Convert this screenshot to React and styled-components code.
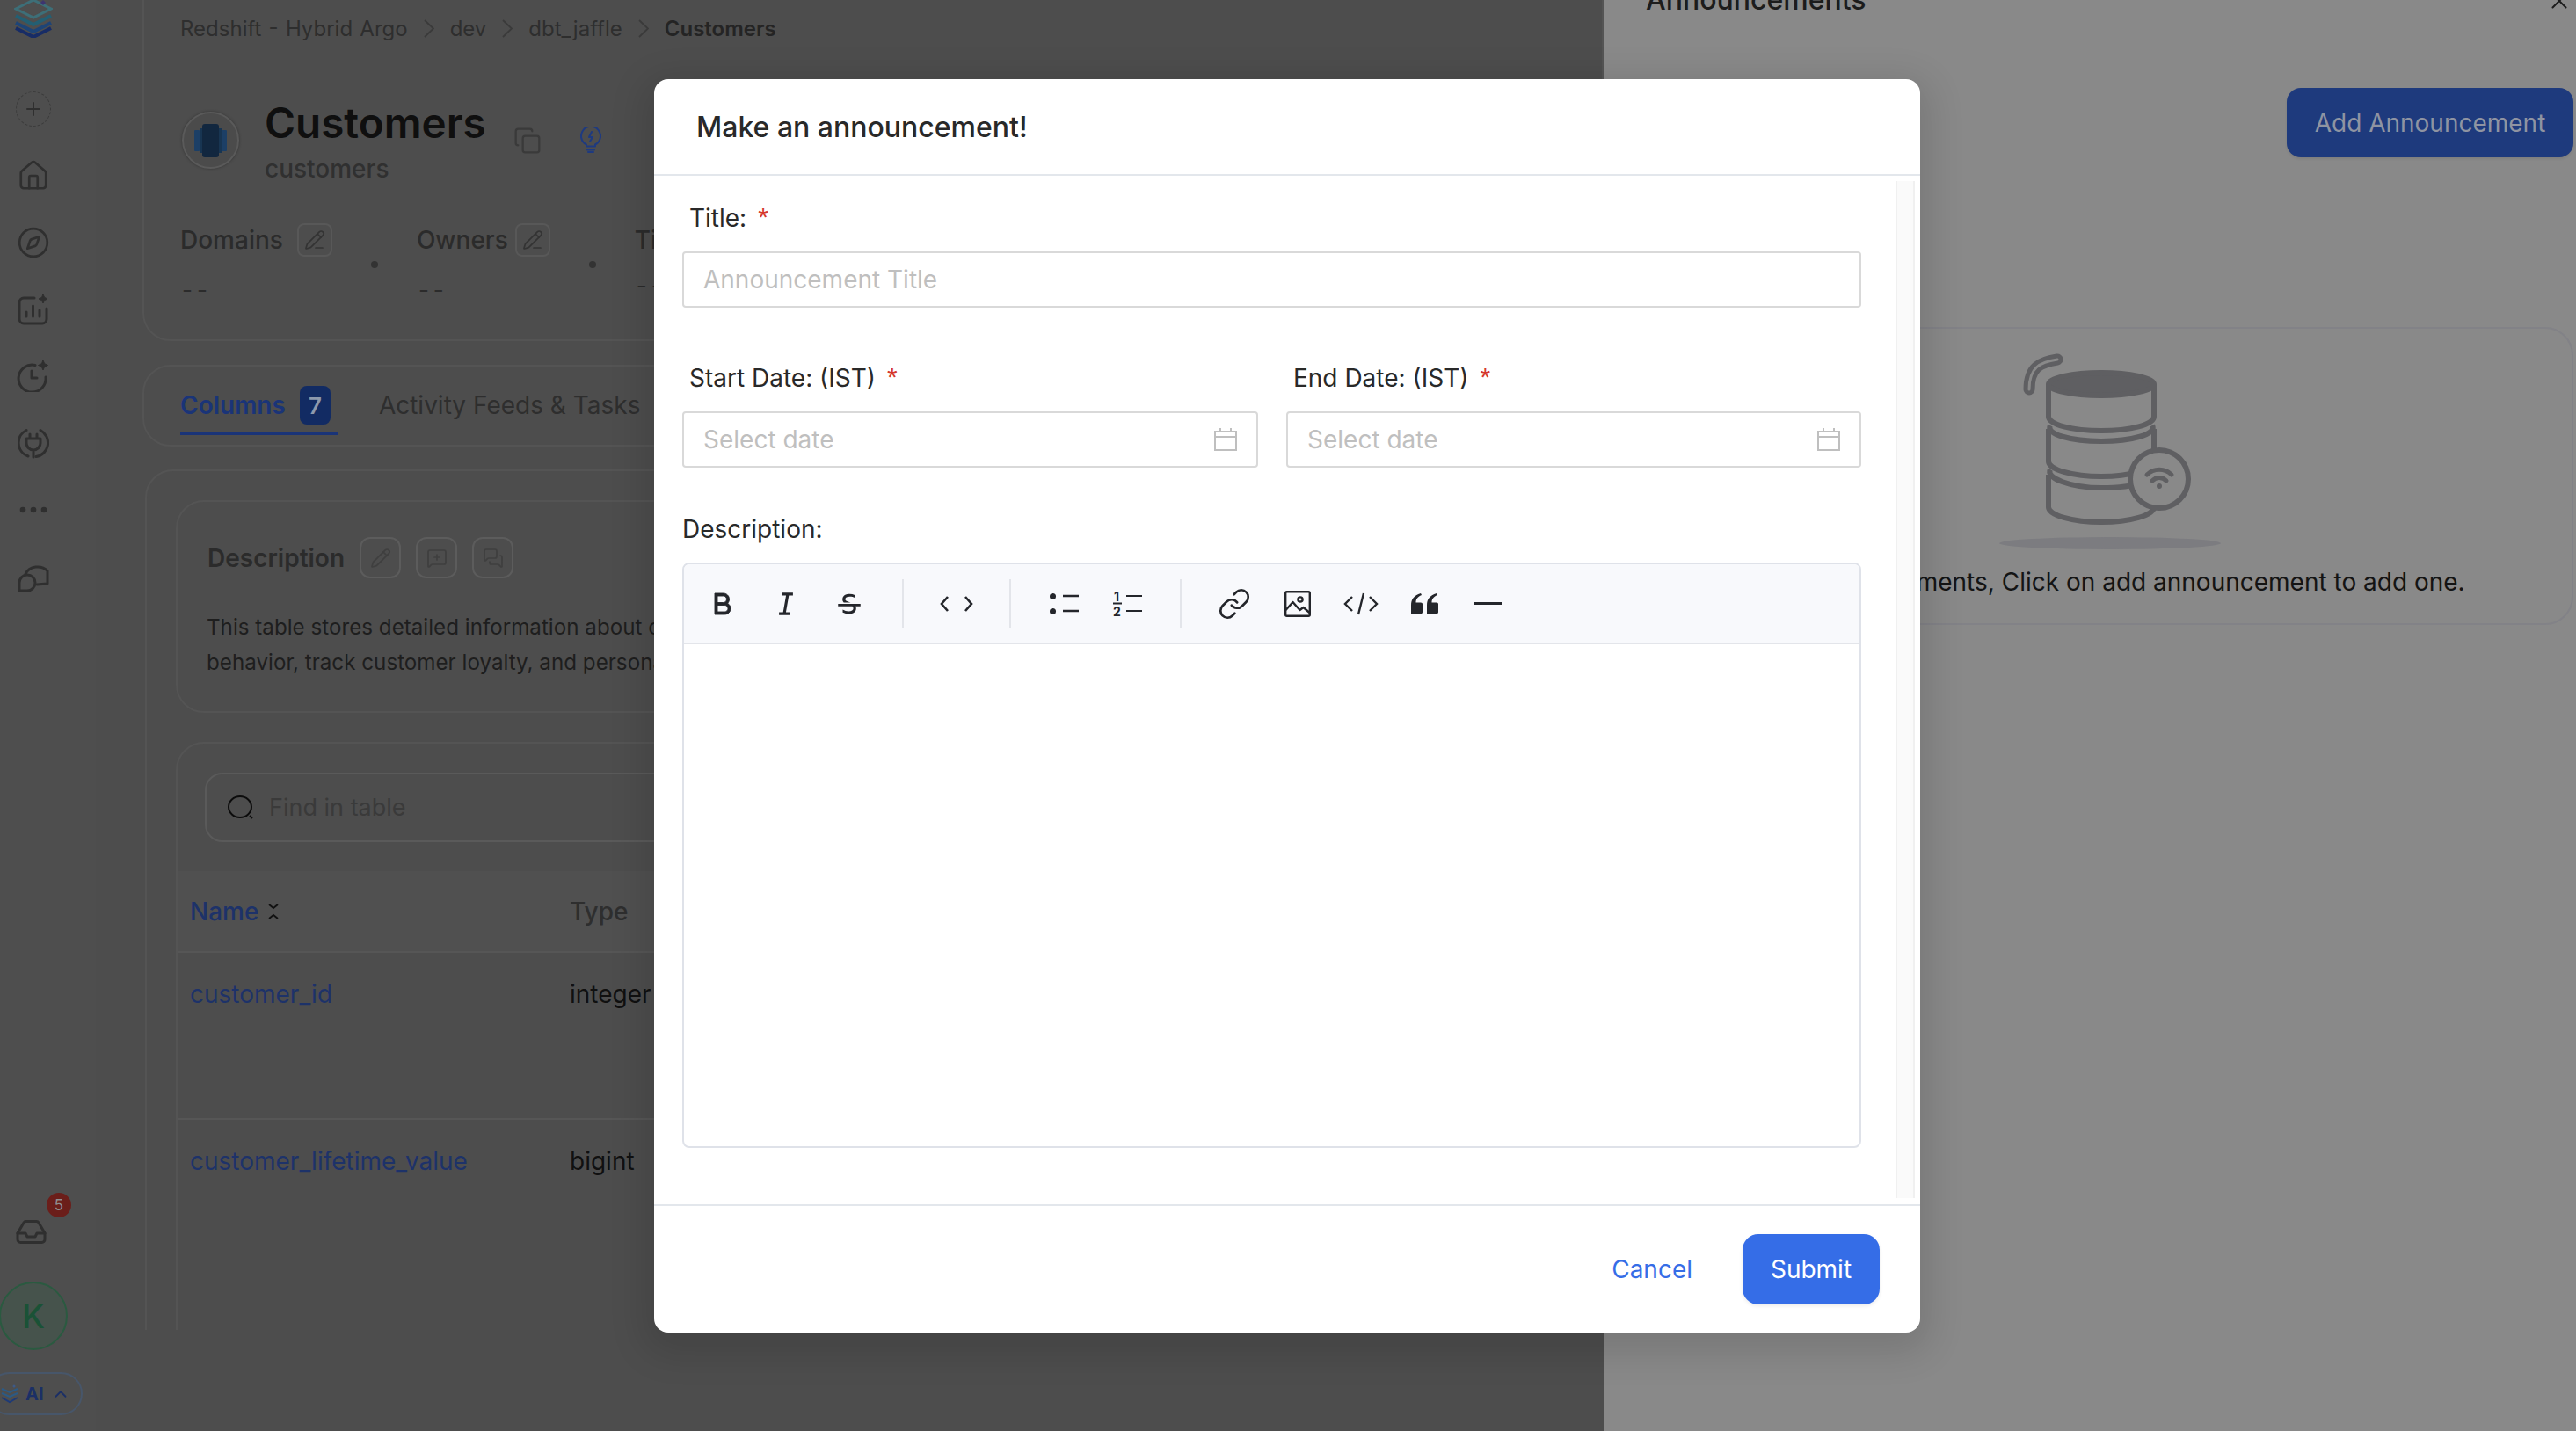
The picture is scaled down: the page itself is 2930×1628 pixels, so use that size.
import React from 'react';
import styled, { createGlobalStyle } from 'styled-components';
import { RiBold, RiItalic, RiStrikethrough } from 'react-icons/ri';
import {
  ChevronUp,
  Compass,
  Copy,
  House,
  Link,
  MessageSquarePlus,
  MessagesSquare,
  Pencil,
  PencilLine,
  Plus,
  X,
} from 'lucide-react';

const GlobalStyle = createGlobalStyle`
  html, body {
    margin: 0;
    padding: 0;
    background: #4d4d4d;
    overflow: hidden;
  }
  * {
    box-sizing: border-box;
  }
`;

const Screen = styled.div`
  position: relative;
  display: flex;
  width: 2930px;
  height: 1628px;
  overflow: hidden;
  font-family: Inter, 'Liberation Sans', sans-serif;
`;

/* left page, behind both masks */
const Page = styled.div`
  flex: 0 0 1824px;
  display: flex;
  background: #4d4d4d;
`;

const Sidebar = styled.aside`
  flex: 0 0 109px;
  height: 1628px;
  display: flex;
  flex-direction: column;
  justify-content: space-between;
  background: #4e4e4e;
  color: #2f2f2f;
`;

const NavGroup = styled.nav`
  display: flex;
  flex-direction: column;
  align-items: center;
  width: 76px;
`;

const LogoWrap = styled.div`
  height: 43px;
  margin-bottom: 43px;
`;

const NavSlot = styled.div`
  height: 76px;
  display: flex;
  align-items: center;
  justify-content: center;
`;

const DashedPlus = styled.div`
  width: 40px;
  height: 40px;
  border-radius: 50%;
  border: 1px dashed #3c3c3c;
  display: flex;
  align-items: center;
  justify-content: center;
`;

const BottomGroup = styled.div`
  display: flex;
  flex-direction: column;
  align-items: flex-start;
  padding-bottom: 18px;
`;

const InboxWrap = styled.div`
  position: relative;
  margin-left: 18px;
  width: 35px;
  height: 27px;
  margin-bottom: 43px;
`;

const Badge = styled.span`
  position: absolute;
  left: 35px;
  top: -31px;
  width: 28px;
  height: 28px;
  border-radius: 50%;
  background: #6b1e1a;
  color: #8f8f8f;
  font-size: 17px;
  display: flex;
  align-items: center;
  justify-content: center;
`;

const Avatar = styled.div`
  width: 78px;
  height: 78px;
  margin-left: -1px;
  border-radius: 50%;
  background: #46534c;
  border: 2px solid #2a5a40;
  color: #1a5236;
  font-size: 38px;
  font-weight: 500;
  display: flex;
  align-items: center;
  justify-content: center;
`;

const AiPill = styled.div`
  margin-top: 25px;
  margin-left: -14px;
  width: 108px;
  height: 49px;
  padding-left: 13px;
  border-radius: 25px;
  border: 2px solid #47566a;
  display: flex;
  align-items: center;
  gap: 8px;
  color: #1b2f66;
  font-size: 20px;
  font-weight: 700;
`;

const Main = styled.main`
  flex: 1;
  min-width: 0;
  height: 1513px;
  overflow: hidden;
  padding-left: 53px;
`;

const Card = styled.section`
  border: 2px solid #545454;
  border-radius: 32px;
`;

const SummaryCard = styled(Card)`
  margin-top: -40px;
  height: 428px;
  padding: 54px 0 0 41px;
`;

const Breadcrumb = styled.div`
  display: flex;
  align-items: center;
  height: 32px;
  gap: 18px;
  color: #2e2e2e;
  font-size: 24px;
  word-spacing: 1.5px;
`;

const Crumb = styled.span`
  font-weight: ${p => (p.$current ? 600 : 400)};
  color: ${p => (p.$current ? '#242424' : 'inherit')};
`;

const TitleRow = styled.div`
  display: flex;
  align-items: flex-start;
  margin-top: 64px;
`;

const ServiceIcon = styled.div`
  width: 65px;
  height: 65px;
  margin: 15px 29px 0 2px;
  border-radius: 50%;
  background: #4b4b4b;
  border: 2px solid #5a5a5a;
  box-shadow: 0 0 3px #333;
  display: flex;
  align-items: center;
  justify-content: center;
`;

const TitleBlock = styled.div`
  display: flex;
  flex-direction: column;
`;

const EntityTitle = styled.h1`
  margin: 0;
  font-size: 47.6px;
  line-height: 56px;
  font-weight: 600;
  color: #0f0f0f;
`;

const EntitySub = styled.div`
  margin-top: 8px;
  font-size: 28px;
  line-height: 32px;
  font-weight: 500;
  color: #303030;
`;

const TitleIcon = styled.div`
  margin: 32px 0 0 ${p => p.$gap}px;
  color: ${p => p.$color || '#3a3a3a'};
  display: flex;
`;

const MetaRow = styled.div`
  display: flex;
  align-items: center;
  gap: 44px;
  margin-top: 45px;
`;

const MetaItem = styled.div`
  display: flex;
  flex-direction: column;
  height: 96px;
`;

const MetaHeader = styled.div`
  display: flex;
  align-items: center;
  height: 40px;
  gap: 8px;
  font-size: 28px;
  font-weight: 500;
  color: #2b2b2b;
`;

const EditBox = styled.div`
  width: 40px;
  height: 38px;
  margin-left: ${p => p.$ml || 0}px;
  border: 2px solid #585858;
  border-radius: 8px;
  display: flex;
  align-items: center;
  justify-content: center;
  color: #333;
`;

const MetaValue = styled.div`
  margin-top: ${p => (p.$raised ? 16 : 21)}px;
  font-size: 26px;
  line-height: 32px;
  letter-spacing: 5px;
  margin-left: 2px;
  color: #2b2b2b;
`;

const Dot = styled.span`
  width: 8px;
  height: 8px;
  border-radius: 50%;
  background: #333;
`;

const TabsCard = styled(Card)`
  margin-top: 27px;
  height: 93px;
  padding-left: 41px;
  display: flex;
  gap: 47px;
`;

const Tab = styled.div`
  height: 80px;
  padding: ${p => (p.$active ? '16px 8px 0 0' : '12px 0 0')};
  margin-top: -2px;
  display: flex;
  align-items: center;
  gap: 16px;
  font-size: 28px;
  font-weight: ${p => (p.$active ? 600 : 400)};
  color: ${p => (p.$active ? '#1a3478' : '#2e2e2e')};
  border-bottom: ${p => (p.$active ? '4px solid #1a3478' : 'none')};
`;

const TabCount = styled.span`
  width: 35px;
  height: 44px;
  border-radius: 8px;
  background: #122b63;
  color: #8d99ad;
  font-size: 26px;
  display: flex;
  align-items: center;
  justify-content: center;
`;

const ContentCard = styled(Card)`
  margin: 26px 0 0 3px;
  padding: 33px 0 0 33px;
  height: 1100px;
`;

const DescriptionCard = styled(Card)`
  height: 242px;
  padding: 40px 0 0 33px;
`;

const DescriptionHead = styled.div`
  display: flex;
  align-items: center;
  height: 47px;
  gap: 17px;
`;

const DescriptionTitle = styled.h3`
  margin: 0;
  padding-left: 1px;
  font-size: 28px;
  font-weight: 600;
  color: #2b2b2b;
`;

const ActionBox = styled.div`
  width: 47px;
  height: 47px;
  border: 2px solid #5c5c5c;
  border-radius: 12px;
  display: flex;
  align-items: center;
  justify-content: center;
  color: #3f3f3f;
`;

const DescriptionText = styled.p`
  margin: 36px 0 0;
  font-size: 24.2px;
  line-height: 40px;
  white-space: nowrap;
  color: #1e1e1e;
`;

const TableCard = styled(Card)`
  margin-top: 33px;
  height: 800px;
  padding-top: 33px;
`;

const SearchBox = styled.div`
  margin-left: 31px;
  height: 79px;
  width: 1000px;
  border: 2px solid #5a5a5a;
  border-radius: 20px;
  display: flex;
  align-items: center;
  gap: 17px;
  padding-left: 24px;
  color: #3a3a3a;
  font-size: 27px;
`;

const TableHead = styled.div`
  margin-top: 33px;
  height: 93px;
  background: #505050;
  border-bottom: 2px solid #565656;
  display: grid;
  grid-template-columns: 432px 1fr;
  align-items: center;
  padding-left: 14px;
  font-size: 28px;
  font-weight: 500;
  color: #2e2e2e;
`;

const HeadName = styled.span`
  display: flex;
  align-items: center;
  gap: 11px;
  color: #1d3269;
`;

const TableRow = styled.div`
  height: 188px;
  display: grid;
  grid-template-columns: 432px 1fr;
  padding: 27px 0 0 14px;
  font-size: 28px;
  line-height: 40px;
  color: #101010;

  & + & {
    border-top: 2px solid #565656;
  }
`;

const ColumnLink = styled.span`
  color: #1d3269;
`;

/* announcements drawer, behind the modal mask */
const Drawer = styled.aside`
  flex: 1;
  min-width: 0;
  height: 1628px;
  padding: 0 3px 0 48px;
  background: #898989;
  display: flex;
  flex-direction: column;
`;

const DrawerHead = styled.header`
  display: flex;
  justify-content: space-between;
  margin-top: -22px;
  height: 44px;
  padding-right: 1px;
  color: #1c1c1c;
`;

const DrawerTitle = styled.h2`
  margin: 0;
  font-size: 32px;
  line-height: 44px;
  font-weight: 500;
`;

const CloseIcon = styled(X)`
  margin-top: 8px;
`;

const DrawerActions = styled.div`
  margin-top: 78px;
  display: flex;
  justify-content: flex-end;
`;

const AddButton = styled.button`
  width: 326px;
  height: 79px;
  border: 0;
  border-radius: 16px;
  background: #1e3a7d;
  color: #8f94a2;
  font-family: inherit;
  font-size: 28px;
  box-shadow: 0 2px 3px rgba(0, 0, 0, 0.08);
`;

const EmptyCard = styled.div`
  margin-top: 193px;
  height: 339px;
  padding-top: 26px;
  border: 2px solid #828287;
  border-radius: 32px;
  display: flex;
  flex-direction: column;
  align-items: center;
`;

const EmptyText = styled.p`
  margin: 12px 0 0;
  padding-left: 4px;
  font-size: 28px;
  line-height: 40px;
  white-space: nowrap;
  color: #141414;
`;

/* modal */
const Modal = styled.div`
  position: absolute;
  left: 744px;
  top: 90px;
  width: 1440px;
  height: 1426px;
  display: flex;
  flex-direction: column;
  background: #fff;
  border-radius: 16px;
  box-shadow: 0 12px 40px 12px rgba(0, 0, 0, 0.12);
`;

const ModalHead = styled.header`
  flex: 0 0 110px;
  display: flex;
  align-items: center;
  padding-left: 48px;
  border-bottom: 2px solid #e3e7ec;
  font-size: 32px;
  font-weight: 500;
  color: #292929;
`;

const ModalBody = styled.div`
  flex: 1;
  min-height: 0;
  display: flex;
  justify-content: space-between;
  padding: 6px 6px 7px 32px;
`;

const Form = styled.form`
  flex: 0 0 1341px;
  padding-top: 22px;
`;

const Label = styled.label`
  display: flex;
  align-items: center;
  height: 40px;
  margin-bottom: 18px;
  padding-left: ${p => (p.$flush ? 0 : 8)}px;
  font-size: 28px;
  color: #292929;
`;

const Required = styled.span`
  margin: 0 0 2px 13px;
  font-family: 'Liberation Sans', sans-serif;
  font-size: 30px;
  line-height: 30px;
  color: #d5382c;
`;

const Field = styled.div`
  height: 64px;
  display: flex;
  align-items: center;
  justify-content: space-between;
  padding: 0 22px;
  border: 2px solid #d9d9d9;
  border-radius: 4px;
  font-size: 28px;
  color: #bfbfbf;
`;

const DateRow = styled.div`
  display: grid;
  grid-template-columns: 655px 654px;
  gap: 32px;
  margin-top: 60px;
`;

const DescriptionLabelWrap = styled.div`
  margin-top: 50px;
`;

const Editor = styled.div`
  height: 666px;
  border: 2px solid #dfe2e9;
  border-radius: 8px;
  overflow: hidden;
`;

const Toolbar = styled.div`
  height: 91px;
  display: flex;
  align-items: center;
  padding-left: 8px;
  background: #f8f9fc;
  border-bottom: 2px solid #e3e5ea;
`;

const ToolGroup = styled.div`
  display: flex;
  align-items: center;
`;

const ToolDivider = styled.span`
  width: 2px;
  height: 55px;
  margin: 0 24px;
  background: #e3e5ea;
`;

const Tool = styled.div`
  width: 72px;
  height: 48px;
  display: flex;
  align-items: center;
  justify-content: center;
  color: #24262b;
`;

const ScrollTrack = styled.div`
  flex: 0 0 22px;
  background: #fafafa;
  border-left: 2px solid #f0f0f0;
  border-right: 2px solid #f0f0f0;
`;

const ModalFoot = styled.footer`
  flex: 0 0 146px;
  display: flex;
  align-items: center;
  justify-content: flex-end;
  gap: 57px;
  padding-right: 46px;
  border-top: 2px solid #e3e7ec;
`;

const CancelButton = styled.button`
  padding: 0;
  border: 0;
  background: none;
  font-family: inherit;
  font-size: 28px;
  color: #356de7;
`;

const SubmitButton = styled.button`
  width: 156px;
  height: 80px;
  border: 0;
  border-radius: 18px;
  background: #356de7;
  color: #fff;
  font-family: inherit;
  font-size: 28px;
  box-shadow: 0 2px 4px rgba(0, 0, 0, 0.08);
`;

const Logo = () => (
  <svg width="44" height="43" viewBox="0 0 44 43" fill="none">
    <path d="M2 10 L22 0 L42 10 L22 20 Z" stroke="#3d6f78" strokeWidth="3" />
    <path d="M2 18 L22 28 L42 18" stroke="#235f73" strokeWidth="4" />
    <path d="M2 26 L22 36 L42 26" stroke="#1d4477" strokeWidth="4" />
    <path d="M2 32 L22 42 L42 32" stroke="#172c66" strokeWidth="4" />
    <path d="M33 0 L36 3 L33 6 L30 3 Z" fill="#3d3570" />
  </svg>
);

const CrumbChevron = () => (
  <svg width="12" height="21" viewBox="0 0 12 21" fill="none" stroke="#3a3a3a" strokeWidth="1.800">
    <path d="M1 1l10 9.500L1 20" />
  </svg>
);

const ChartSpark = () => (
  <svg width="36" height="36" viewBox="0 0 36 36" fill="none" stroke="currentColor" strokeWidth="3" strokeLinecap="round" strokeLinejoin="round">
    <path d="M19 5H7a5 5 0 0 0-5 5v19a5 5 0 0 0 5 5h21a5 5 0 0 0 5-5V17" />
    <path d="M10 26v-5M17.500 26V14M25 26v-7" />
    <path d="M29 1l1.600 3.400L34 6l-3.400 1.600L29 11l-1.600-3.400L24 6l3.400-1.600z" fill="currentColor" strokeWidth="1" />
  </svg>
);

const ClockSpark = () => (
  <svg width="38" height="36" viewBox="0 0 38 36" fill="none" stroke="currentColor" strokeWidth="3" strokeLinecap="round" strokeLinejoin="round">
    <path d="M21 5.500A15.500 15.500 0 1 0 33 19" />
    <path d="M17 12v8h6" />
    <path d="M30 0l1.700 3.800L35.500 5.500l-3.800 1.700L30 11l-1.700-3.800L24.500 5.500l3.800-1.700z" fill="currentColor" strokeWidth="1" />
  </svg>
);

const PlugCircle = () => (
  <svg width="36" height="36" viewBox="0 0 36 36" fill="none" stroke="currentColor" strokeWidth="3" strokeLinecap="round" strokeLinejoin="round">
    <path d="M10 3.500A16 16 0 0 0 12 33M26 3.500A16 16 0 0 1 21 33.500" />
    <path d="M10 13h16v5a8 8 0 0 1-16 0zM14 8v5M22 8v5M18 26v8" />
  </svg>
);

const Dots = () => (
  <svg width="32" height="8" viewBox="0 0 32 8" fill="currentColor">
    <circle cx="4" cy="4" r="3.300" />
    <circle cx="16" cy="4" r="3.300" />
    <circle cx="28" cy="4" r="3.300" />
  </svg>
);

const ChatBubbles = () => (
  <svg width="36" height="36" viewBox="0 0 36 36" fill="none" stroke="currentColor" strokeWidth="3" strokeLinecap="round" strokeLinejoin="round">
    <path d="M9 15A15 13.500 0 0 1 34 11.500V26l-12 1" />
    <path d="M2 34V25a9 9 0 1 1 9 9z" />
  </svg>
);

const Tray = () => (
  <svg width="35" height="27" viewBox="0 0 35 27" fill="none" stroke="currentColor" strokeWidth="3" strokeLinejoin="round" strokeLinecap="round">
    <path d="M2 15L9 3a3 3 0 0 1 2.500-1.500h12A3 3 0 0 1 26 3l7 12" />
    <path d="M2 15h9l2 4h9l2-4h9v7a3.500 3.500 0 0 1-3.500 3.500h-24A3.500 3.500 0 0 1 2 22z" />
  </svg>
);

const MiniStack = () => (
  <svg width="20" height="22" viewBox="0 0 20 22" fill="none" stroke="#2b5a86" strokeWidth="2">
    <path d="M1 5l9 4 9-4M1 10l9 4 9-4" />
    <path d="M1 15l9 5 9-5" stroke="#1d3a78" />
    <circle cx="15" cy="2" r="1.500" fill="#3d5a88" stroke="none" />
  </svg>
);

const RedshiftMark = () => (
  <svg width="38" height="38" viewBox="0 0 38 38">
    <rect x="0" y="7" width="6" height="24" rx="1" fill="#1c3f66" />
    <rect x="31" y="7" width="6" height="24" rx="1" fill="#1c3f66" />
    <rect x="9" y="0" width="19" height="38" rx="3" fill="#12273f" />
    <rect x="6" y="5" width="3" height="28" fill="#183552" />
    <rect x="28" y="5" width="3" height="28" fill="#183552" />
  </svg>
);

const BulbBolt = () => (
  <svg width="24" height="30" viewBox="0 0 24 30" fill="none" stroke="currentColor" strokeWidth="2" strokeLinecap="round" strokeLinejoin="round">
    <path d="M7 22.500v-2A11 11 0 1 1 17 20.500v2z" />
    <path d="M8 26.500h8M9 29h6" />
    <path d="M13 6l-3 6h4l-3 5" />
  </svg>
);

const SearchRing = () => (
  <svg width="30" height="28" viewBox="0 0 30 28" fill="none" stroke="#0c0c0c" strokeWidth="2">
    <ellipse cx="14" cy="13" rx="13" ry="12" />
    <path d="M25 23l3 3" />
  </svg>
);

const SortMark = () => (
  <svg width="12" height="18" viewBox="0 0 12 18" fill="none" stroke="#111" strokeWidth="1.800">
    <path d="M1 1l5 4 5-4M1 17l5-4 5 4" />
  </svg>
);

const CalendarMark = () => (
  <svg width="26" height="26" viewBox="0 0 26 26" fill="none" stroke="#bfbfbf" strokeWidth="2">
    <rect x="1" y="4" width="24" height="21" />
    <path d="M1 10h24M7 0v5M19 0v5" />
  </svg>
);

const AngleCode = () => (
  <svg width="38" height="18" viewBox="0 0 38 18" fill="none" stroke="currentColor" strokeWidth="2.600">
    <path d="M9 1L2 9l7 8M29 1l7 8-7 8" />
  </svg>
);

const BulletList = () => (
  <svg width="33" height="24" viewBox="0 0 33 24" fill="none">
    <circle cx="3.500" cy="3.500" r="3.500" fill="currentColor" />
    <circle cx="3.500" cy="20.500" r="3.500" fill="currentColor" />
    <path d="M15 3h18M15 20h18" stroke="currentColor" strokeWidth="2.400" />
  </svg>
);

const NumberList = () => (
  <svg width="34" height="32" viewBox="0 0 34 32">
    <path d="M16 7h18M16 24h18M1 15.500h10" stroke="currentColor" strokeWidth="2.200" fill="none" />
    <text x="2" y="13" fontFamily="Inter, sans-serif" fontSize="14" fontWeight="700" fill="currentColor">1</text>
    <text x="1" y="30" fontFamily="Inter, sans-serif" fontSize="14" fontWeight="700" fill="currentColor">2</text>
  </svg>
);

const ImageMark = () => (
  <svg width="30" height="30" viewBox="0 0 30 30" fill="none" stroke="currentColor" strokeWidth="2.400" strokeLinejoin="round">
    <rect x="1.200" y="1.200" width="27.600" height="27.600" rx="1.500" />
    <circle cx="18" cy="10" r="2.600" />
    <path d="M1.500 22l8-9 8 9 4-3 7 6" />
  </svg>
);

const SlashCode = () => (
  <svg width="40" height="26" viewBox="0 0 40 26" fill="none" stroke="currentColor" strokeWidth="2.400">
    <path d="M10 5l-8 8 8 8M30 5l8 8-8 8M23 1l-6 24" />
  </svg>
);

const QuoteMark = () => (
  <svg width="31" height="24" viewBox="0 0 31 30" preserveAspectRatio="none" fill="currentColor">
    <path d="M0 29V17C0 9 3 3 11 0l1 2.500C7 5 5.500 9 5.500 13H11a2 2 0 0 1 2 2v12a2 2 0 0 1-2 2z" />
    <path d="M18 29V17c0-8 3-14 11-17l1 2.500C25 5 23.500 9 23.500 13H29a2 2 0 0 1 2 2v12a2 2 0 0 1-2 2z" />
  </svg>
);

const HrMark = () => (
  <svg width="31" height="4" viewBox="0 0 31 4">
    <rect width="31" height="3" fill="currentColor" />
  </svg>
);

const EmptyIllustration = () => (
  <svg width="260" height="230" viewBox="0 0 260 230" fill="none" stroke="#5f5f62" strokeWidth="6" strokeLinejoin="round">
    <ellipse cx="130" cy="218" rx="126" ry="7" fill="#7c7c80" stroke="none" />
    <path d="M38 43C38 18 50 12 70 9" stroke="#5f5f62" strokeWidth="13" strokeLinecap="round" />
    <path d="M38 43C38 18 50 12 70 9" stroke="#898989" strokeWidth="3" strokeLinecap="round" />
    <ellipse cx="120" cy="37" rx="60" ry="13" fill="#5f5f62" />
    <path d="M60 37v37c0 9 27 16 60 16s60-7 60-16V37" />
    <path d="M62 84c-6 10 24 18 58 18s64-8 58-18" />
    <path d="M60 88v37c0 9 27 17 60 17s60-8 60-17" />
    <path d="M180 88v50" />
    <path d="M62 134c-6 10 24 21 58 21 20 0 36-2 46-6" />
    <path d="M60 140v37c0 9 27 17 60 17s60-8 60-17" />
    <circle cx="186" cy="145" r="33" fill="#898989" />
    <path d="M172 140a20 20 0 0 1 28 0M178 147a11 11 0 0 1 16 0" strokeLinecap="round" strokeWidth="5" />
    <circle cx="186" cy="153" r="3" fill="#5f5f62" stroke="none" />
  </svg>
);

const App = () => (
  <Screen>
    <GlobalStyle />
    <Page>
      <Sidebar>
        <NavGroup>
          <LogoWrap>
            <Logo />
          </LogoWrap>
          <NavSlot>
            <DashedPlus>
              <Plus size={24} strokeWidth={2} />
            </DashedPlus>
          </NavSlot>
          <NavSlot><House size={38} strokeWidth={1.7} /></NavSlot>
          <NavSlot><Compass size={38} strokeWidth={1.7} /></NavSlot>
          <NavSlot><ChartSpark /></NavSlot>
          <NavSlot><ClockSpark /></NavSlot>
          <NavSlot><PlugCircle /></NavSlot>
          <NavSlot><Dots /></NavSlot>
          <NavSlot><ChatBubbles /></NavSlot>
        </NavGroup>
        <BottomGroup>
          <InboxWrap>
            <Tray />
            <Badge>5</Badge>
          </InboxWrap>
          <Avatar>K</Avatar>
          <AiPill>
            <MiniStack />
            AI
            <ChevronUp size={22} strokeWidth={2} color="#1b2f66" />
          </AiPill>
        </BottomGroup>
      </Sidebar>
      <Main>
        <SummaryCard>
          <Breadcrumb>
            <Crumb>Redshift - Hybrid Argo</Crumb>
            <CrumbChevron />
            <Crumb>dev</Crumb>
            <CrumbChevron />
            <Crumb>dbt_jaffle</Crumb>
            <CrumbChevron />
            <Crumb $current>Customers</Crumb>
          </Breadcrumb>
          <TitleRow>
            <ServiceIcon><RedshiftMark /></ServiceIcon>
            <TitleBlock>
              <EntityTitle>Customers</EntityTitle>
              <EntitySub>customers</EntitySub>
            </TitleBlock>
            <TitleIcon $gap={31}><Copy size={32} strokeWidth={1.7} /></TitleIcon>
            <TitleIcon $gap={44} $color="#1e3a80"><BulbBolt /></TitleIcon>
          </TitleRow>
          <MetaRow>
            <MetaItem>
              <MetaHeader>Domains <EditBox $ml={8}><PencilLine size={24} strokeWidth={1.7} /></EditBox></MetaHeader>
              <MetaValue>--</MetaValue>
            </MetaItem>
            <Dot />
            <MetaItem>
              <MetaHeader>Owners <EditBox><PencilLine size={24} strokeWidth={1.7} /></EditBox></MetaHeader>
              <MetaValue>--</MetaValue>
            </MetaItem>
            <Dot />
            <MetaItem>
              <MetaHeader>Tier</MetaHeader>
              <MetaValue $raised>--</MetaValue>
            </MetaItem>
          </MetaRow>
        </SummaryCard>
        <TabsCard>
          <Tab $active>Columns <TabCount>7</TabCount></Tab>
          <Tab>Activity Feeds &amp; Tasks</Tab>
        </TabsCard>
        <ContentCard>
          <DescriptionCard>
            <DescriptionHead>
              <DescriptionTitle>Description</DescriptionTitle>
              <ActionBox><Pencil size={24} strokeWidth={1.7} /></ActionBox>
              <ActionBox><MessageSquarePlus size={24} strokeWidth={1.7} /></ActionBox>
              <ActionBox><MessagesSquare size={24} strokeWidth={1.7} /></ActionBox>
            </DescriptionHead>
            <DescriptionText>
              This table stores detailed information about customers, their
              <br />
              behavior, track customer loyalty, and personalize
            </DescriptionText>
          </DescriptionCard>
          <TableCard>
            <SearchBox><SearchRing />Find in table</SearchBox>
            <TableHead>
              <HeadName>Name <SortMark /></HeadName>
              <span>Type</span>
            </TableHead>
            <TableRow>
              <ColumnLink>customer_id</ColumnLink>
              <span>integer</span>
            </TableRow>
            <TableRow>
              <ColumnLink>customer_lifetime_value</ColumnLink>
              <span>bigint</span>
            </TableRow>
          </TableCard>
        </ContentCard>
      </Main>
    </Page>
    <Drawer>
      <DrawerHead>
        <DrawerTitle>Announcements</DrawerTitle>
        <CloseIcon size={30} strokeWidth={1.6} />
      </DrawerHead>
      <DrawerActions>
        <AddButton>Add Announcement</AddButton>
      </DrawerActions>
      <EmptyCard>
        <EmptyIllustration />
        <EmptyText>No Announcements, Click on add announcement to add one.</EmptyText>
      </EmptyCard>
    </Drawer>
    <Modal>
      <ModalHead>Make an announcement!</ModalHead>
      <ModalBody>
        <Form>
          <Label>Title: <Required>*</Required></Label>
          <Field>Announcement Title</Field>
          <DateRow>
            <div>
              <Label>Start Date: (IST) <Required>*</Required></Label>
              <Field>Select date <CalendarMark /></Field>
            </div>
            <div>
              <Label>End Date: (IST) <Required>*</Required></Label>
              <Field>Select date <CalendarMark /></Field>
            </div>
          </DateRow>
          <DescriptionLabelWrap>
            <Label $flush>Description:</Label>
          </DescriptionLabelWrap>
          <Editor>
            <Toolbar>
              <ToolGroup>
                <Tool><RiBold size={36} stroke="currentColor" strokeWidth={0.6} /></Tool>
                <Tool><RiItalic size={38} /></Tool>
                <Tool><RiStrikethrough size={34} /></Tool>
              </ToolGroup>
              <ToolDivider />
              <ToolGroup>
                <Tool><AngleCode /></Tool>
              </ToolGroup>
              <ToolDivider />
              <ToolGroup>
                <Tool><BulletList /></Tool>
                <Tool><NumberList /></Tool>
              </ToolGroup>
              <ToolDivider />
              <ToolGroup>
                <Tool><Link size={38} strokeWidth={1.7} /></Tool>
                <Tool><ImageMark /></Tool>
                <Tool><SlashCode /></Tool>
                <Tool><QuoteMark /></Tool>
                <Tool><HrMark /></Tool>
              </ToolGroup>
            </Toolbar>
          </Editor>
        </Form>
        <ScrollTrack />
      </ModalBody>
      <ModalFoot>
        <CancelButton>Cancel</CancelButton>
        <SubmitButton>Submit</SubmitButton>
      </ModalFoot>
    </Modal>
  </Screen>
);

export default App;
